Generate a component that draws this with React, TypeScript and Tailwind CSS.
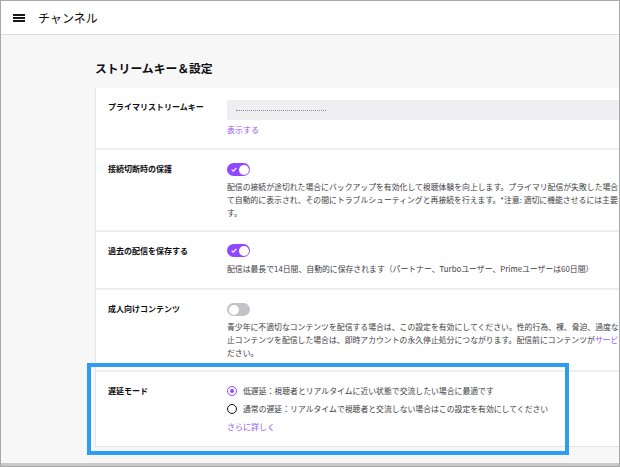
import React from 'react';

const font = { fontFamily: '"Noto Sans CJK JP", "Liberation Sans", sans-serif' };

function Toggle({ on }: { on: boolean }) {
    if (!on) {
        return <div className="w-[23px] h-[13px] rounded-full bg-[#c3c3c7] flex items-center px-[1.5px]">
            <div className="w-[10px] h-[10px] rounded-full bg-white"></div>
        </div>;
    }
    return <div className="w-[23px] h-[13px] rounded-full bg-[#9147ff] flex items-center justify-between pl-[4px] pr-[1.5px]">
        <svg width="6" height="5" viewBox="0 0 6 5">
            <path d="M0.6 2.6 L2.3 4.1 L5.4 0.8" stroke="white" strokeWidth="1.2" fill="none" />
        </svg>
        <div className="w-[10px] h-[10px] rounded-full bg-white"></div>
    </div>;
}

function Row({ label, children, last }: { label: string; children: React.ReactNode; last?: boolean }) {
    return <div className={`flex pl-[12px] ${last ? '' : 'border-b-2 border-[#efeff1]'}`}>
        <div className="w-[119px] shrink-0 text-[8px] leading-[13px] font-bold text-[#0e0e10] pt-[12px]">{label}</div>
        <div className="flex-1 min-w-0">{children}</div>
    </div>;
}

const body = 'text-[7.85px] leading-[13px] text-[#3d3d42] whitespace-nowrap';

export default function App() {
    return <div style={font} className="w-[620px] h-[467px] overflow-hidden border border-[#a9a9a9] flex flex-col bg-[#f7f7f8] relative">
        <div className="h-[34px] shrink-0 bg-white border-b border-[#dcdce3] flex items-center pl-[12px]">
            <div className="flex flex-col gap-[1px] w-[12px]">
                <div className="h-[2px] bg-[#18181b]"></div>
                <div className="h-[2px] bg-[#18181b]"></div>
                <div className="h-[2px] bg-[#18181b]"></div>
            </div>
            <span className="ml-[13px] text-[12px] leading-[16px] text-[#0e0e10]">チャンネル</span>
        </div>
        <div className="flex-1 pl-[94px] pt-[25px]">
            <div className="text-[11.8px] leading-[16px] font-bold text-[#0e0e10] mb-[12px]">ストリームキー＆設定</div>
            <div className="bg-white border-l border-b border-[#e4e4e7] w-[540px]">
                <Row label="プライマリストリームキー">
                    <div className="pt-[12px] pb-[12px]">
                        <div className="h-[20px] bg-[#efeff1] flex items-center pl-[9px]">
                            <div className="w-[90px] border-t border-dotted border-[#8a8a90]"></div>
                        </div>
                        <div className="mt-[3px] text-[8px] leading-[13px] text-[#9557f5]">表示する</div>
                    </div>
                </Row>
                <Row label="接続切断時の保護">
                    <div className="pt-[13px] pb-[11px]">
                        <Toggle on />
                        <div className={`mt-[4px] ${body}`}>
                            <div>配信の接続が途切れた場合にバックアップを有効化して視聴体験を向上します。プライマリ配信が失敗した場合、バックアップ</div>
                            <div>て自動的に表示され、その間にトラブルシューティングと再接続を行えます。*注意: 適切に機能させるには主要な</div>
                            <div>す。</div>
                        </div>
                    </div>
                </Row>
                <Row label="過去の配信を保存する">
                    <div className="pt-[12px] pb-[13px]">
                        <Toggle on />
                        <div className={`mt-[5px] ${body}`}>配信は最長で14日間、自動的に保存されます（パートナー、Turboユーザー、Primeユーザーは60日間）</div>
                    </div>
                </Row>
                <Row label="成人向けコンテンツ">
                    <div className="pt-[13px] pb-[11px]">
                        <Toggle on={false} />
                        <div className={`mt-[4px] ${body}`}>
                            <div>青少年に不適切なコンテンツを配信する場合は、この設定を有効にしてください。性的行為、裸、脅迫、過度な暴力などの禁</div>
                            <div>止コンテンツを配信した場合は、即時アカウントの永久停止処分につながります。配信前にコンテンツが<span className="text-[#9557f5]">サービス規約</span>に</div>
                            <div>ださい。</div>
                        </div>
                    </div>
                </Row>
                <Row label="遅延モード" last>
                    <div className="pt-[12px] pb-[13px] flex flex-col gap-[5px]">
                        <div className={`flex items-center ${body}`}>
                            <div className="w-[10px] h-[10px] rounded-full border-[1.5px] border-[#9147ff] flex items-center justify-center mr-[6px]">
                                <div className="w-[4px] h-[4px] rounded-full bg-[#9147ff]"></div>
                            </div>
                            低遅延：視聴者とリアルタイムに近い状態で交流したい場合に最適です
                        </div>
                        <div className={`flex items-center ${body}`}>
                            <div className="w-[10px] h-[10px] rounded-full border-[1.5px] border-[#0e0e10] mr-[6px]"></div>
                            通常の遅延：リアルタイムで視聴者と交流しない場合はこの設定を有効にしてください
                        </div>
                        <div className="text-[8px] leading-[13px] text-[#9557f5]">さらに詳しく</div>
                    </div>
                </Row>
            </div>
        </div>
        <div className="h-[3px] shrink-0 bg-[#c8c8c8]"></div>
        <div className="absolute left-[86px] top-[362px] w-[482px] h-[92px] border-[4px] border-[#2f9cf4]"></div>
    </div>;
}
